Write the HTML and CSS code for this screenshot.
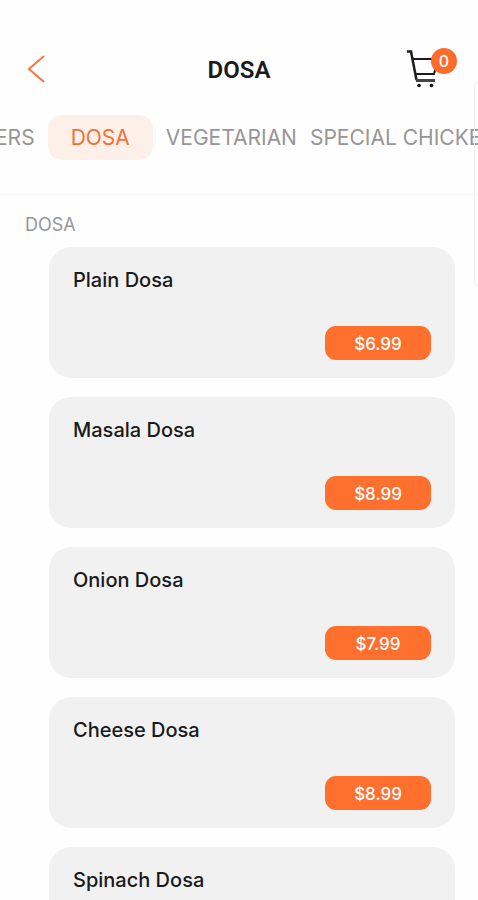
FILE: index.html
```html
<!DOCTYPE html>
<html lang="en">
<head>
<meta charset="utf-8">
<meta name="viewport" content="width=device-width, initial-scale=1">
<title>Dosa</title>
<link rel="stylesheet" href="styles.css">
</head>
<body>
<div class="screen">
  <header class="header">
    <button class="icon-button" type="button" aria-label="Back">
      <svg width="20" height="30" viewBox="0 0 20 30" fill="none" stroke="#fa7440" stroke-width="2"><path d="M17 2L2 15L17 28"/></svg>
    </button>
    <h1 class="title">DOSA</h1>
    <button class="icon-button cart" type="button" aria-label="Cart">
      <svg width="34" height="40" viewBox="0 0 34 40" fill="none" stroke="#1c1c1c" stroke-width="2"><path d="M0 2.500H4L9.500 31" stroke-width="2.500"/><path d="M6 10H30M8 25H27L31 10"/><path d="M9 31.500H28" stroke="#444" stroke-width="3"/><circle cx="12" cy="36.500" r="1.800" fill="#111" stroke="none"/><circle cx="24.500" cy="36.500" r="1.800" fill="#111" stroke="none"/></svg>
      <span class="badge">0</span>
    </button>
  </header>
  <nav class="tabs">
    <a class="tab" href="#">ERS</a>
    <a class="tab tab-active" href="#" aria-current="page">DOSA</a>
    <a class="tab" href="#">VEGETARIAN</a>
    <a class="tab" href="#">SPECIAL CHICKE</a>
  </nav>
  <main class="menu">
    <h2 class="section-title">DOSA</h2>
    <ul class="items">
      <li class="card"><h3 class="name">Plain Dosa</h3><button class="price" type="button">$6.99</button></li>
      <li class="card"><h3 class="name">Masala Dosa</h3><button class="price" type="button">$8.99</button></li>
      <li class="card"><h3 class="name">Onion Dosa</h3><button class="price" type="button">$7.99</button></li>
      <li class="card"><h3 class="name">Cheese Dosa</h3><button class="price" type="button">$8.99</button></li>
      <li class="card"><h3 class="name">Spinach Dosa</h3></li>
    </ul>
  </main>
  <div class="edge-handle"></div>
</div>
</body>
</html>
```
FILE: styles.css
```css
* {
  box-sizing: border-box;
}

body {
  margin: 0;
  background: #fefefe;
  color: #1a1a1a;
  font-family: Inter, "Liberation Sans", sans-serif;
}

button {
  border: 0;
  padding: 0;
  background: none;
  font: inherit;
}

h1, h2, h3, ul {
  margin: 0;
  padding: 0;
}

.screen {
  position: relative;
  display: flex;
  flex-direction: column;
  height: 100vh;
  overflow: hidden;
}

.header {
  display: grid;
  grid-template-columns: 50px 1fr 50px;
  align-items: center;
  padding: 48px 21px 0 21px;
}

.icon-button {
  display: flex;
  height: 42px;
  align-items: center;
  padding-left: 6px;
}

.title {
  padding-top: 2px;
  text-align: center;
  font: 600 24px/28px Roboto, sans-serif;
}

.cart {
  position: relative;
  padding-left: 0;
}

.badge {
  position: absolute;
  top: 0;
  right: 0;
  width: 26px;
  height: 26px;
  border-radius: 50%;
  background: #fd6b2d;
  color: #fff;
  font-size: 16px;
  font-weight: 500;
  line-height: 27px;
  text-align: center;
}

.tabs {
  display: flex;
  flex-shrink: 0;
  gap: 13px;
  height: 105px;
  margin-left: -5px;
  padding: 25px 0 34px;
  border-bottom: 1px solid #f7f7f7;
  overflow: hidden;
}

.tab {
  flex: none;
  color: #969696;
  font-size: 21px;
  line-height: 45px;
  text-decoration: none;
  white-space: nowrap;
}

.tab-active {
  padding: 0 23px;
  border-radius: 14px;
  background: #fdf0e9;
  color: #f56f35;
}

.menu {
  padding: 18px 23px 0 25px;
}

.section-title {
  color: #969696;
  font-size: 18px;
  font-weight: 400;
  line-height: 24px;
}

.items {
  display: grid;
  gap: 19px;
  margin: 10px 0 0 24px;
  list-style: none;
}

.card {
  display: flex;
  flex-direction: column;
  align-items: flex-start;
  justify-content: space-between;
  height: 131px;
  padding: 20px 24px 18px;
  border-radius: 22px;
  background: #f1f1f1;
}

.name {
  font-size: 20px;
  font-weight: 500;
  line-height: 26px;
}

.price {
  align-self: flex-end;
  width: 106px;
  height: 34px;
  padding-top: 2px;
  border-radius: 11px;
  background: #ff6f2e;
  color: #fff;
  font-size: 17px;
  font-weight: 500;
  line-height: 32px;
}

.edge-handle {
  position: absolute;
  top: 82px;
  right: 0;
  width: 4px;
  height: 204px;
  border: 1px solid #f0f0f0;
  border-right: 0;
  border-radius: 4px 0 0 4px;
}
```
